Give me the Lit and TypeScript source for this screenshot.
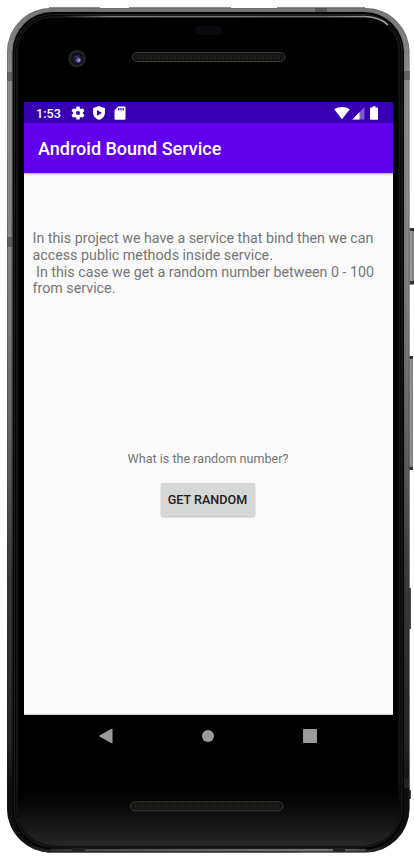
import { LitElement, html, svg, css } from "lit";
import { customElement } from "lit/decorators.js";

@customElement("device-shell")
class DeviceShell extends LitElement {
  static styles = css`
    :host { display: block; }
    svg { display: block; }
  `;

  render() {
    return html`<svg width="414" height="856" viewBox="0 0 414 856">
      <defs>
        <linearGradient id="rim" x1="0" y1="0" x2="0" y2="1">
          <stop offset="0" stop-color="#777" />
          <stop offset=".08" stop-color="#8d8d8d" />
          <stop offset=".3" stop-color="#858585" />
          <stop offset=".5" stop-color="#666" />
          <stop offset=".68" stop-color="#383838" />
          <stop offset=".87" stop-color="#262626" />
          <stop offset=".93" stop-color="#0c0c0c" />
          <stop offset=".99" stop-color="#111" />
          <stop offset="1" stop-color="#303030" />
        </linearGradient>
        <linearGradient id="edge" x1="0" y1="0" x2="0" y2="1">
          <stop offset="0" stop-color="#666" />
          <stop offset=".5" stop-color="#3a3a3a" />
          <stop offset="1" stop-color="#0c0c0c" />
        </linearGradient>
        <linearGradient id="chin" x1="0" y1="0" x2="0" y2="1">
          <stop offset="0" stop-color="#000" stop-opacity="0" />
          <stop offset=".4" stop-color="#090909" />
          <stop offset="1" stop-color="#262626" />
        </linearGradient>
        <linearGradient id="shine" gradientUnits="userSpaceOnUse" x1="60" y1="0" x2="388" y2="0">
          <stop offset="0" stop-color="#7b8083" stop-opacity="0" />
          <stop offset=".15" stop-color="#7b8083" />
          <stop offset=".8" stop-color="#6c7072" />
          <stop offset="1" stop-color="#aaa" />
        </linearGradient>
        <linearGradient id="foot" gradientUnits="userSpaceOnUse" x1="40" y1="0" x2="375" y2="0">
          <stop offset="0" stop-color="#222" />
          <stop offset=".15" stop-color="#484848" />
          <stop offset=".5" stop-color="#666" />
          <stop offset=".85" stop-color="#777" />
          <stop offset="1" stop-color="#333" />
        </linearGradient>
        <linearGradient id="key" x1="0" x2="1">
          <stop offset="0" stop-color="#555" />
          <stop offset=".4" stop-color="#9b9b9b" />
          <stop offset="1" stop-color="#777" />
        </linearGradient>
        <pattern id="mesh" width="4" height="5" patternUnits="userSpaceOnUse">
          <path d="M1 0L2 2L1 5M3 0L4 2L3 5" stroke="#34322c" stroke-width=".6" fill="none" />
        </pattern>
      </defs>
      <rect x="408" y="228" width="6" height="57" rx="1" fill="url(#key)" />
      <path d="M410 228h4v3h-4zM410 281h4v3h-4z" fill="#333" />
      <rect x="408" y="356" width="5" height="114" rx="1" fill="url(#key)" />
      <path d="M409 356h4v3h-4zM409 467h4v3h-4z" fill="#333" />
      <path d="M408 588h3v41h-3zM408 790h3v9h-3z" fill="#4a4a4a" />
      <rect x="7" y="8" width="402.500" height="844.500" rx="44" fill="url(#rim)" />
      <path d="M49 7.500h51M129 7.500h102M277 7.500h88" stroke="#8b8b8b" />
      <rect x="7.500" y="8.500" width="401.500" height="843.500" rx="43.500" fill="none" stroke="url(#edge)" opacity=".5" />
      <rect x="11.500" y="11.500" width="393.500" height="838.500" rx="41" fill="none" stroke="url(#edge)" opacity=".4" />
      <rect x="12.500" y="12" width="391.500" height="837.500" rx="40" fill="#030303" />
      <rect x="14.500" y="14.500" width="387.500" height="832.500" rx="38" fill="none" stroke="#222" />
      <rect x="17" y="17" width="382.500" height="828" rx="35" fill="#000" stroke="#141414" stroke-width="2" />
      <path d="M17 780H400V804Q400 845 356 846H62Q18 845 17 804Z" fill="url(#chin)" />
      <path d="M62 16.500H365Q380 17 388 25" fill="none" stroke="url(#shine)" stroke-width="1.400" />
      <path d="M50 850H366" stroke="url(#foot)" stroke-width="2.500" />
      <path d="M47 852.500h252" stroke="#5c5c5c" />
      <path d="M7 72h6v9H7zM404 71h6v9h-6zM7 237h6v10H7zM315 8h12v4h-12z" fill="#333" fill-opacity=".45" />
      <path d="M72 848h13v4H72zM333 848h12v4h-12zM404 778h5v10h-5z" fill="#222" />
      <rect x="195" y="26" width="27" height="9" rx="4.500" fill="#090a0e" />
      <circle cx="77" cy="58.500" r="8.700" fill="#222223" />
      <circle cx="77" cy="58.500" r="6.200" fill="#11111a" />
      <circle cx="77.500" cy="59" r="4" fill="#20213e" />
      <path d="M75 56l5 2 1 3-3 2-2-2z" fill="#5355a0" />
      <circle cx="79" cy="60.500" r="1.300" fill="#a39bd9" />
      <circle cx="76" cy="58" r="1" fill="#080a20" />
      ${this.grille(132.5, 52.5)} ${this.grille(130.5, 801.8)}
    </svg>`;
  }

  private grille(x: number, y: number) {
    return svg`
      <rect x=${x} y=${y} width="152.500" height="9" rx="4.500" fill="#11110f" stroke="#3b3b37" />
      <rect x=${x + 3} y=${y + 2} width="146" height="5" rx="2" fill="url(#mesh)" />
    `;
  }
}

@customElement("status-bar")
class StatusBar extends LitElement {
  static styles = css`
    :host {
      display: flex; align-items: center; justify-content: space-between;
      box-sizing: border-box; height: 21px; padding: 0 15px 0 12px;
      background: #3700b3; color: #fff;
      font: 500 12.6px/21px Roboto, sans-serif;
    }
    svg { display: block; fill: currentColor; }
    .left, .right { display: flex; align-items: center; }
    .time { width: 35px; padding-top: 1px; }
    .gear { margin-right: 7px; }
    .shield { margin-right: 8px; }
    .wifi { margin-right: 2px; }
    .signal { margin-right: 5px; }
    .faint { opacity: .35; }
  `;

  render() {
    return html`
      <div class="left">
        <span class="time">1:53</span>
        <svg class="gear" width="14" height="14" viewBox="1.800 1.800 20.400 20.400">
          <path d="M19.140 12.940c.04-.3.06-.61.06-.94s-.02-.64-.07-.94l2.030-1.580a.49.49 0 0 0 .12-.61l-1.920-3.320a.488.488 0 0 0-.59-.22l-2.390.96c-.5-.38-1.030-.7-1.620-.94l-.36-2.540a.484.484 0 0 0-.48-.41h-3.840c-.24 0-.43.17-.47.41l-.36 2.540c-.59.24-1.130.57-1.620.94l-2.390-.96c-.22-.08-.47 0-.59.22L2.740 8.870c-.12.21-.08.47.12.61l2.030 1.580c-.05.3-.09.63-.09.94s.02.64.07.94l-2.030 1.580a.49.49 0 0 0-.12.61l1.920 3.320c.12.22.37.29.59.22l2.390-.96c.5.38 1.030.7 1.620.94l.36 2.540c.05.24.24.41.48.41h3.840c.24 0 .44-.17.47-.41l.36-2.540c.59-.24 1.130-.56 1.620-.94l2.390.96c.22.08.47 0 .59-.22l1.920-3.320c.12-.22.07-.47-.12-.61zM12 15A3 3 0 1 1 12 9a3 3 0 0 1 0 6z" />
        </svg>
        <svg class="shield" width="14" height="14" viewBox="0 0 14 14">
          <path fill-rule="evenodd" d="M7 0l6 2.200v4.500c0 3.400-2.200 5.800-6 7.300-3.800-1.500-6-3.900-6-7.300V2.200zM5 4v5.800L10 6.900z" />
        </svg>
        <svg class="card" width="12" height="14" viewBox="0 0 12 14">
          <path fill-rule="evenodd" d="M4 .5h6.500q1 0 1 1v11.200q0 1-1 1H1.500q-1 0-1-1V4.200zM4.200 2v2.600h1.200V2zm2.200 0v2.600h1.200V2zm2.200 0v2.600h1.200V2z" />
        </svg>
      </div>
      <div class="right">
        <svg class="wifi" width="16" height="14" viewBox="0 0 16 14">
          <path d="M.2 3.200C5 .2 11 .2 15.800 3.200L8 13.200z" />
        </svg>
        <svg class="signal" width="13" height="14" viewBox="0 0 13 14">
          <path class="faint" d="M12.500 1v12.500H.5z" /><path d="M7.500 6v7.500H.3z" />
        </svg>
        <svg width="8" height="14" viewBox="0 0 8 14">
          <path d="M2.500.3h3v1.200H7q1 0 1 1v10.200q0 1-1 1H1q-1 0-1-1V2.500q0-1 1-1h1.500z" />
        </svg>
      </div>
    `;
  }
}

@customElement("app-root")
class AppRoot extends LitElement {
  static styles = css`
    :host {
      display: block; position: relative; width: 414px; height: 856px;
      background: #fff; overflow: hidden; font-family: Roboto, sans-serif;
    }
    .shell { position: absolute; inset: 0; }
    .device {
      position: relative; display: flex; flex-direction: column;
      box-sizing: border-box; height: 856px; padding: 102px 21px 0 24px;
    }
    .bar {
      box-sizing: border-box; height: 50px; padding: 1px 14px 0;
      background: #6200ee; color: #fff; font-size: 18px; line-height: 50px;
      font-weight: 500; z-index: 1; box-shadow: 0 1px 2px #0005;
    }
    .content {
      box-sizing: border-box; height: 542px; padding: 57px 9.5px 0 8.5px;
      display: flex; flex-direction: column; align-items: center;
      background: #fafafa; border-bottom: 1px solid #ccd3d0; color: #757575;
    }
    .about {
      align-self: stretch; margin: 0; white-space: pre;
      font-size: 14.28px; line-height: 16.8px; height: 220px;
    }
    .question { margin: 0; font-size: 12.6px; line-height: 18px; }
    .action {
      margin: 15px 1px 0 0; padding: 0; width: 94px; height: 33px; border: 0;
      border-radius: 2px; background: #d6d7d7; color: #212121;
      font: 500 12.6px/33px Roboto, sans-serif;
      box-shadow: 0 1px 2px #0004;
    }
    .nav {
      display: flex; justify-content: space-between; align-items: center;
      height: 42px; padding: 0 76px 0 75px;
    }
    .nav svg { display: block; fill: #9b9b9b; }
  `;

  render() {
    return html`
      <device-shell class="shell"></device-shell>
      <div class="device">
        <status-bar></status-bar>
        <div class="bar">Android Bound Service</div>
        <div class="content">
          <p class="about">${"In this project we have a service that bind then we can\naccess public methods inside service.\n In this case we get a random number between 0 - 100\nfrom service."}</p>
          <p class="question">What is the random number?</p>
          <button class="action">GET RANDOM</button>
        </div>
        <div class="nav">
          <svg width="14" height="16" viewBox="0 0 14 16"><path d="M.8 7.300L12.500.8q1-.5 1 .5v13.400q0 1-1 .5L.8 8.700q-1-.7 0-1.400z" /></svg>
          <svg width="12" height="12" viewBox="0 0 12 12"><circle cx="6" cy="6" r="6" /></svg>
          <svg width="14" height="14" viewBox="0 0 14 14"><rect width="14" height="14" rx=".8" /></svg>
        </div>
      </div>
    `;
  }
}
